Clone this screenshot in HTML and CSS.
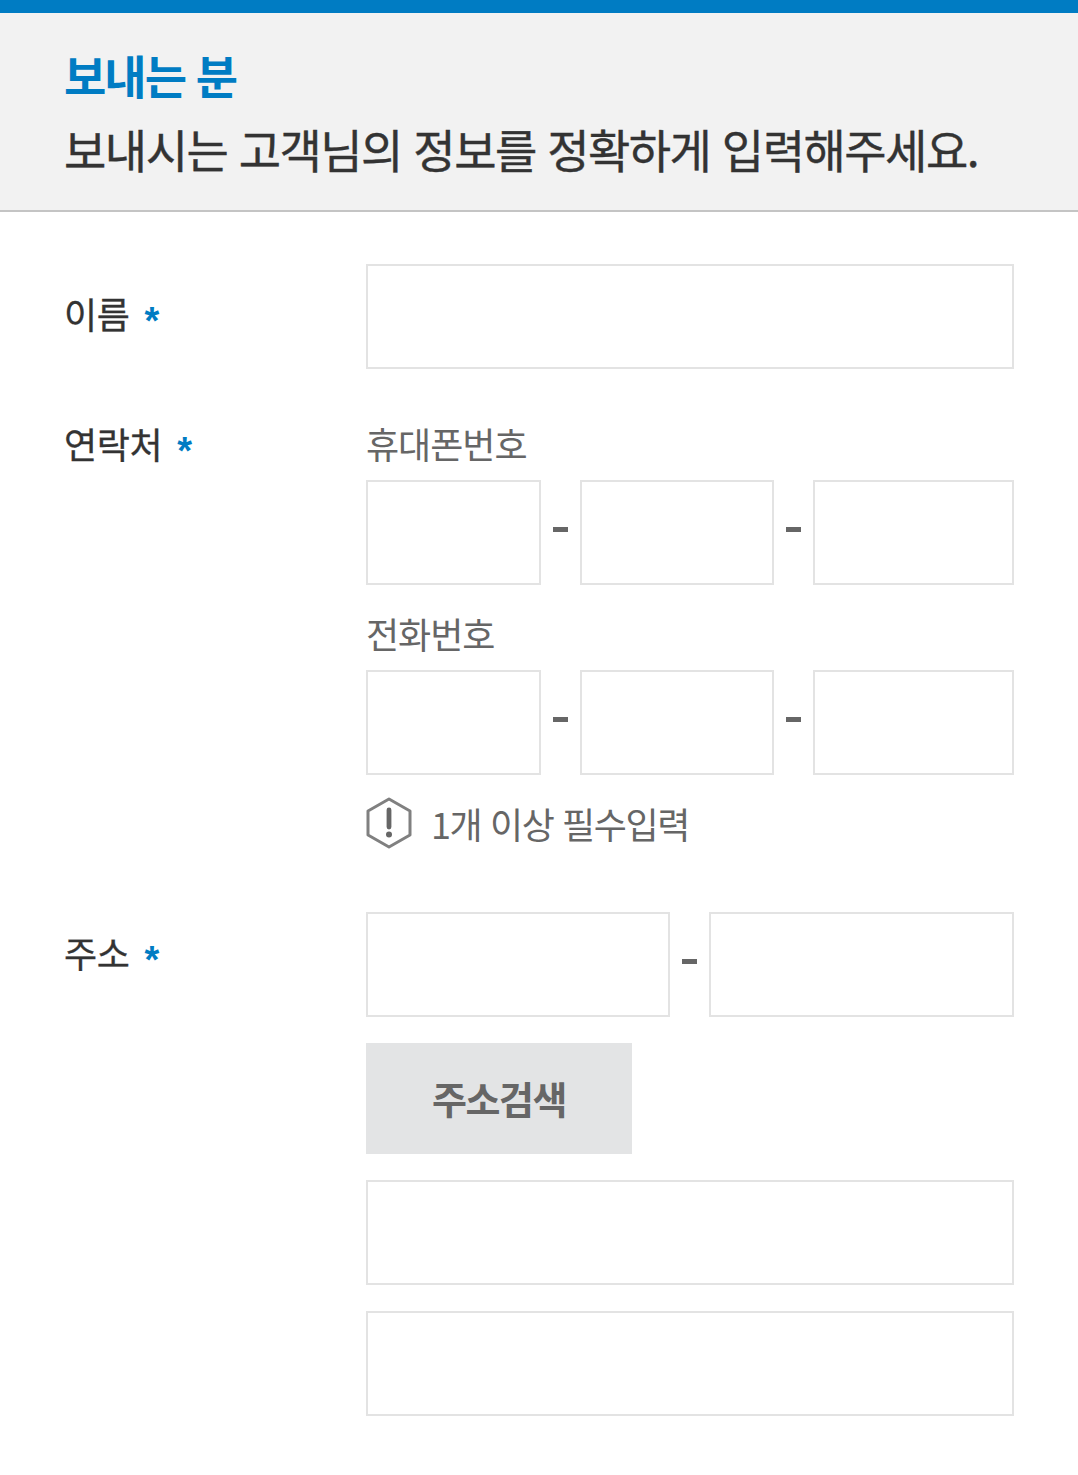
FILE: index.html
```html
<!DOCTYPE html>
<html lang="ko">
<head>
<meta charset="utf-8">
<title>보내는 분</title>
<link rel="stylesheet" href="styles.css">
</head>
<body>
<header class="head">
  <h1 class="title">보내는 분</h1>
  <p class="desc">보내시는 고객님의 정보를 정확하게 입력해주세요.</p>
</header>
<form class="form">
  <div class="row">
    <div class="label label-name">이름<span class="req">*</span></div>
    <div class="field"><input class="input" type="text"></div>
  </div>
  <div class="row row-contact">
    <div class="label label-contact">연락처<span class="req">*</span></div>
    <div class="field">
      <div class="sub">휴대폰번호</div>
      <div class="tel">
        <input class="input" type="text"><span class="dash"></span>
        <input class="input" type="text"><span class="dash"></span>
        <input class="input" type="text">
      </div>
      <div class="sub sub-second">전화번호</div>
      <div class="tel">
        <input class="input" type="text"><span class="dash"></span>
        <input class="input" type="text"><span class="dash"></span>
        <input class="input" type="text">
      </div>
      <div class="note">
        <svg class="note-icon" width="46" height="52" viewBox="0 0 46 52" aria-hidden="true">
          <path d="M23 2 44 14V38L23 50 2 38V14Z" fill="none" stroke="#808080" stroke-width="3" stroke-linejoin="round"/>
          <path d="M23 13V30" stroke="#666" stroke-width="4.8" stroke-linecap="round"/>
          <circle cx="23" cy="37.5" r="3" fill="#666"/>
        </svg>
        <span>1개 이상 필수입력</span>
      </div>
    </div>
  </div>
  <div class="row row-addr">
    <div class="label label-addr">주소<span class="req">*</span></div>
    <div class="field">
      <div class="zip">
        <input class="input" type="text"><span class="dash"></span>
        <input class="input" type="text">
      </div>
      <button class="btn" type="button">주소검색</button>
      <input class="input input-gap" type="text">
      <input class="input input-gap" type="text">
    </div>
  </div>
</form>
</body>
</html>
```
FILE: styles.css
```css
* { box-sizing: border-box; }
html, body { margin: 0; padding: 0; }
body {
  width: 1078px;
  height: 1475px;
  overflow: hidden;
  background: #fff;
  font-family: "Noto Sans CJK KR", "Noto Sans", sans-serif;
  color: #333;
}
.head {
  height: 212px;
  padding: 31px 64px 0;
  background: #f2f2f2;
  border-top: 13px solid #007cc3;
  border-bottom: 2px solid #c4c4c4;
}
.title {
  margin: 0;
  height: 60px;
  font-size: 46px;
  line-height: 60px;
  font-weight: 700;
  letter-spacing: -2px;
  color: #007cc3;
}
.desc {
  margin: 14px 0 0;
  font-size: 46px;
  line-height: 60px;
  font-weight: 400;
  letter-spacing: -1.5px;
  white-space: nowrap;
  -webkit-text-stroke: 0.4px #333;
}
.form { padding: 52px 64px 0; }
.row { display: grid; grid-template-columns: 302px 648px; }
.row-contact { margin-top: 48px; }
.row-addr { margin-top: 63px; }
.label {
  font-size: 36px;
  line-height: 48px;
  letter-spacing: -0.4px;
  white-space: nowrap;
  -webkit-text-stroke: 0.3px #333;
}
.label-name { padding-top: 25px; }
.label-contact { padding-top: 2px; }
.label-addr { padding-top: 16px; }
.req {
  margin-left: 15px;
  color: #007cc3;
  font-family: "Liberation Sans", sans-serif;
  font-size: 38px;
  font-weight: 700;
  line-height: 0;
  letter-spacing: 0;
  vertical-align: -5px;
  -webkit-text-stroke: 0;
}
.input {
  display: block;
  width: 100%;
  height: 105px;
  border: 2px solid #e3e3e3;
  border-radius: 0;
  background: #fff;
  padding: 0;
  margin: 0;
}
.input-gap { margin-top: 26px; }
.sub {
  height: 63px;
  padding-top: 2px;
  font-size: 36px;
  line-height: 48px;
  letter-spacing: -1px;
  color: #666;
}
.sub-second { margin-top: 27px; height: 58px; padding-top: 0; line-height: 42px; }
.tel { display: flex; align-items: center; }
.tel .input:nth-of-type(1) { width: 175px; }
.tel .input:nth-of-type(2) { width: 194px; }
.tel .input:nth-of-type(3) { width: 201px; }
.dash {
  flex: 0 0 39px;
  display: flex;
  justify-content: center;
}
.dash::before {
  content: "";
  width: 15px;
  height: 5px;
  margin-top: -6px;
  background: #666;
}
.zip { display: grid; grid-template-columns: 304px 39px 305px; align-items: center; }
.note {
  display: flex;
  align-items: center;
  gap: 19px;
  margin-top: 22px;
  height: 52px;
  font-size: 36px;
  line-height: 48px;
  letter-spacing: -1.4px;
  color: #666;
}
.note-icon { flex: none; }
.btn {
  display: block;
  width: 266px;
  height: 111px;
  margin-top: 26px;
  border: 0;
  padding: 0 0 2px;
  background: #e3e4e5;
  color: #666;
  font-family: inherit;
  font-size: 38px;
  font-weight: 700;
  letter-spacing: -1.4px;
}
```
